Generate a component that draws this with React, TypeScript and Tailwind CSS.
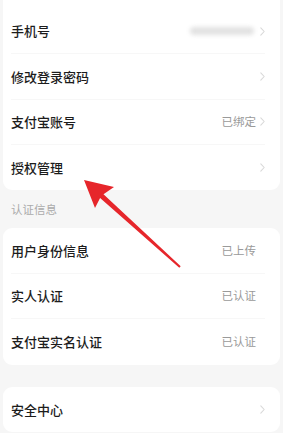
import React from 'react';

type Row = { label: string; value?: string; blur?: boolean; chevron?: boolean };

const account: Row[] = [
  { label: '手机号', blur: true, chevron: true },
  { label: '修改登录密码', chevron: true },
  { label: '支付宝账号', value: '已绑定', chevron: true },
  { label: '授权管理', chevron: true },
];

const verify: Row[] = [
  { label: '用户身份信息', value: '已上传' },
  { label: '实人认证', value: '已认证' },
  { label: '支付宝实名认证', value: '已认证' },
];

function Chevron() {
  return (
    <svg width="5" height="9" viewBox="0 0 5 9" fill="none" className="shrink-0">
      <path d="M0.8 0.8l3.4 3.7-3.4 3.7" stroke="#d9d9d9" strokeWidth="1.1" strokeLinecap="round" strokeLinejoin="round" />
    </svg>
  );
}

function Card({ rows, className = '', rowClass = 'h-[45.5px]' }: { rows: Row[]; className?: string; rowClass?: string }) {
  return (
    <div className={`mx-[3px] rounded-[9px] bg-white ${className}`}>
      {rows.map((row, i) => (
        <div
          key={row.label}
          className={`ml-2 mr-[15px] flex items-center ${rowClass} ${i < rows.length - 1 ? 'border-b border-[#f7f7f7]' : ''}`}
        >
          <span className="flex-1 text-[13px] font-medium text-[#1c1c1c]">{row.label}</span>
          {row.blur && <span className="mr-[2px] h-[8px] w-[64px] rounded-full bg-[#e2e2e2] blur-[2px]" />}
          {row.value && <span className="text-[11.5px] text-[#9a9a9a]">{row.value}</span>}
          <span className="flex w-[9px] justify-end">{row.chevron && <Chevron />}</span>
        </div>
      ))}
    </div>
  );
}

export default function App() {
  return (
    <div
      className="relative h-[433px] w-[283px] overflow-hidden bg-[#f6f6f6]"
      style={{ fontFamily: '"Noto Sans CJK SC", "Noto Sans", sans-serif' }}
    >
      <Card rows={account} className="rounded-t-none pt-[9px]" rowClass="h-[45.3px]" />
      <div className="flex h-[38px] items-center px-[11px] text-[11.5px] text-[#ababab]">认证信息</div>
      <Card rows={verify} />
      <div className="h-[22px]" />
      <Card rows={[{ label: '安全中心', chevron: true }]} />

      <svg className="pointer-events-none absolute left-0 top-0" width="283" height="433" viewBox="0 0 283 433">
        <polygon
          points="84,180 114,187 103.5,194.2 180.7,266.3 179.3,267.7 100.1,198 95,208"
          fill="#e6262b"
        />
      </svg>
    </div>
  );
}
